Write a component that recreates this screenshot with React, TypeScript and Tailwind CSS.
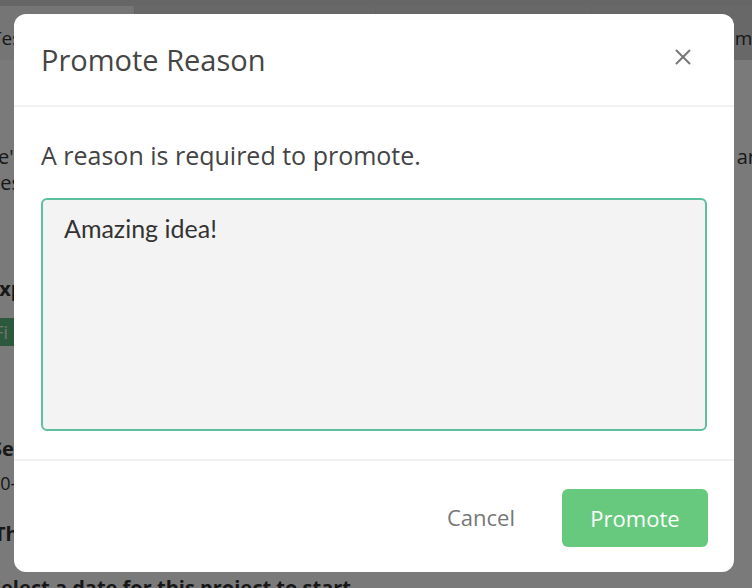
import { X } from "lucide-react";

function BackgroundPage() {
  return (
    <div className="h-[588px] w-[752px] overflow-hidden bg-white text-[#333] font-['Open_Sans',sans-serif]">
      <div className="h-[6px] bg-[#d6d6d6]" />
      <div className="flex h-[54px] bg-[#dadada] text-[19px] leading-[20px]">
        <div className="w-[134px] bg-[#f4f4f4] pt-[22px]">
          <span className="-ml-[9px]">Tes</span>
        </div>
        <div className="w-[241px] border-l border-[#cfcfcf]" />
        <div className="w-[215px] border-l border-[#cfcfcf]" />
        <div className="flex flex-1 justify-end border-l border-[#cfcfcf] pt-[22px]">
          <span className="-mr-[12px]">Temp</span>
        </div>
      </div>
      <div className="flex justify-between pt-[84px] text-[20px] leading-[26px]">
        <div className="flex flex-col">
          <span className="-ml-[2px]">e'</span>
          <span className="-ml-[8px]">res</span>
        </div>
        <span className="-mr-[4px]">ar</span>
      </div>
      <div className="mt-[80px] -ml-[12px] text-[20px] font-bold leading-[26px]">Exp</div>
      <div className="mt-[16px] -ml-[10px] flex h-[28px] w-[40px] items-center justify-end rounded bg-[#5dbb7e] pr-[22px] text-[18px] text-[#e8f5ec]">
        Fi
      </div>
      <div className="mt-[90px] -ml-[9px] text-[20px] font-bold leading-[26px]">Sec</div>
      <div className="mt-[8px] -ml-[10px] text-[18px] leading-[26px]">20-1</div>
      <div className="mt-[25px] -ml-[6px] text-[20px] font-bold leading-[26px]">Th</div>
      <div className="mt-[28px] -ml-[10px] text-[20px] font-bold leading-[26px]">Select a date for this project to start</div>
    </div>
  );
}

export default function App() {
  return (
    <div className="relative h-[588px] w-[752px] overflow-hidden">
      <BackgroundPage />
      <div className="absolute inset-0 bg-black/[0.52]" />
      <div className="absolute inset-0 pl-[14px] pt-[14px]">
        <div className="flex h-[558px] w-[720px] flex-col rounded-[12px] bg-white font-['Open_Sans',sans-serif]">
          <div className="flex h-[93px] items-center justify-between border-b-2 border-[#f2f2f2] pl-[27px] pr-[38px]">
            <h2 className="text-[29px] leading-none text-[#454545]">Promote Reason</h2>
            <button className="-mt-[6px] text-[#777]">
              <X size={26} strokeWidth={1.8} />
            </button>
          </div>
          <div className="flex flex-1 flex-col px-[27px] pt-[33px]">
            <p className="text-[25px] leading-[30px] text-[#444]">A reason is required to promote.</p>
            <textarea
              defaultValue="Amazing idea!"
              className="mt-[28px] h-[233px] w-full resize-none rounded-[6px] border-2 border-[#5cbf9e] bg-[#f3f3f3] px-[21px] py-[13px] font-['Lato',sans-serif] text-[25px] leading-[30px] text-[#333] outline-none"
            />
          </div>
          <div className="flex h-[113px] items-start justify-end gap-[47px] border-t-2 border-[#f2f2f2] pr-[26px] pt-[28px]">
            <button className="mt-[13px] text-[22px] leading-[30px] text-[#777]">Cancel</button>
            <button className="h-[58px] w-[146px] rounded-[6px] bg-[#66c97d] text-[22px] text-white">Promote</button>
          </div>
        </div>
      </div>
    </div>
  );
}
